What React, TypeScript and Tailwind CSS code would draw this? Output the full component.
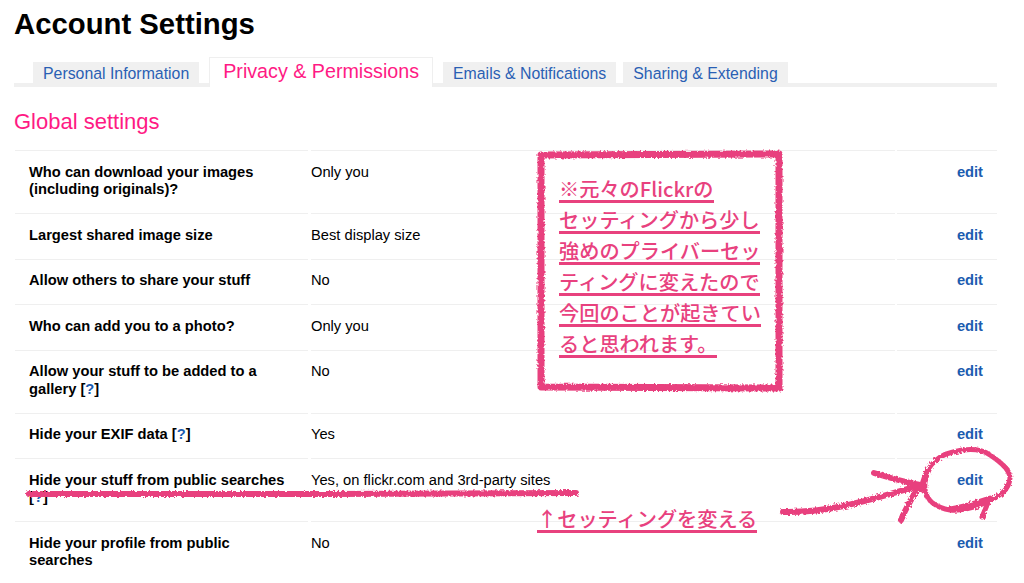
import React from 'react';

interface Row {
  label: React.ReactNode;
  value: string;
}

const Help = () => (
  <span>
    [<a className="text-[#1c5cb0]">?</a>]
  </span>
);

const rows: Row[] = [
  { label: 'Who can download your images (including originals)?', value: 'Only you' },
  { label: 'Largest shared image size', value: 'Best display size' },
  { label: 'Allow others to share your stuff', value: 'No' },
  { label: 'Who can add you to a photo?', value: 'Only you' },
  { label: <>Allow your stuff to be added to a gallery <Help /></>, value: 'No' },
  { label: <>Hide your EXIF data <Help /></>, value: 'Yes' },
  { label: <>Hide your stuff from public searches <Help /></>, value: 'Yes, on flickr.com and 3rd-party sites' },
  { label: 'Hide your profile from public searches', value: 'No' },
];

const noteLines = [
  '※元々のFlickrの',
  'セッティングから少し',
  '強めのプライバーセッ',
  'ティングに変えたので',
  '今回のことが起きてい',
  'ると思われます。',
];

const Tab = ({ children }: { children: React.ReactNode }) => (
  <a className="h-[21px] bg-[#f0f0f0] px-[10px] text-[15.85px] leading-[23px] text-[#2a5fb4]">{children}</a>
);

const Scribbles = () => (
  <svg className="absolute left-0 top-0" width="1024" height="583" fill="none" stroke="#e8417e" strokeLinecap="round" strokeLinejoin="round">
    <defs>
      <filter id="crayon" x="-5%" y="-5%" width="110%" height="110%" filterUnits="userSpaceOnUse">
        <feTurbulence type="fractalNoise" baseFrequency="0.45" numOctaves="2" seed="4" />
        <feDisplacementMap in="SourceGraphic" scale="4" />
      </filter>
    </defs>
    <g filter="url(#crayon)">
      <path d="M541 155 L779 154 L779 388 L541 387 Z" strokeWidth="7" strokeLinecap="square" />
      <path d="M29 494 C200 493 400 495 576 493" strokeWidth="6" />
      <path d="M783 512 C830 513 870 500 918 486" strokeWidth="6" />
      <path d="M874 473 C890 478 905 482 920 485 C912 497 906 508 901 520" strokeWidth="6" />
      <path d="M921 490 C924 470 935 456 953 452 C965 449 980 448 990 455 C1002 463 1010 470 1010 478 C1009 490 1000 496 987 502 C975 508 960 511 950 510 C938 508 927 502 925 490 C924 482 926 476 929 470" strokeWidth="5" />
      <path d="M950 509 C965 507 978 502 990 498 L982 517" strokeWidth="5" />
    </g>
  </svg>
);

export default function App() {
  return (
    <div className="relative h-[583px] w-[1024px] overflow-hidden bg-white font-['Liberation_Sans','Noto_Sans_CJK_JP',sans-serif] text-black">
      <div className="pl-[14px] pr-[27px] pt-2">
        <h1 className="text-[29.3px] font-bold leading-[32px]">Account Settings</h1>

        <div className="mt-[17px] flex h-[30px] items-end border-b-4 border-[#f0f0f0] pl-[19px]">
          <Tab>Personal Information</Tab>
          <a className="z-10 -mb-1 ml-[10px] h-[30px] border border-b-0 border-[#efefef] bg-white px-[13px] text-[19.7px] leading-[27px] text-[#ff1a84]">
            Privacy &amp; Permissions
          </a>
          <div className="ml-[10px] flex gap-[7px]">
            <Tab>Emails &amp; Notifications</Tab>
            <Tab>Sharing &amp; Extending</Tab>
          </div>
        </div>

        <h2 className="mt-[22px] text-[22px] leading-[26px] text-[#ff1a84]">Global settings</h2>

        <div className="mt-[15px] pl-px text-[14.7px] leading-[17.5px]">
          {rows.map((row, i) => (
            <div key={i} className="flex">
              <div className="w-[293px] border-t border-[#efefef] pb-[14.5px] pl-[14px] pr-[15px] pt-[12.5px] font-bold">{row.label}</div>
              <div className="ml-[3px] w-[584px] border-t border-[#efefef] pb-[14.5px] pt-[12.5px]">{row.value}</div>
              <div className="ml-[2px] flex-1 border-t border-[#efefef] pb-[14.5px] pr-[14px] pt-[12.5px] text-right font-bold text-[#1c5cb0]">edit</div>
            </div>
          ))}
        </div>
      </div>

      <Scribbles />

      <div className="absolute left-[559px] top-[172px] font-['Noto_Sans_CJK_JP',sans-serif] text-[20.2px] font-medium leading-[22px] text-[#e8417e]">
        {noteLines.map((line) => (
          <div key={line} className="w-fit border-b-[3px] border-[#e8417e] pt-[6px]">{line}</div>
        ))}
      </div>
      <div className="absolute left-[537px] top-[502px] border-b-[3px] border-[#e8417e] pt-[6px] font-['Noto_Sans_CJK_JP',sans-serif] text-[20.2px] font-medium leading-[22px] text-[#e8417e]">
        ↑セッティングを変える
      </div>
    </div>
  );
}
